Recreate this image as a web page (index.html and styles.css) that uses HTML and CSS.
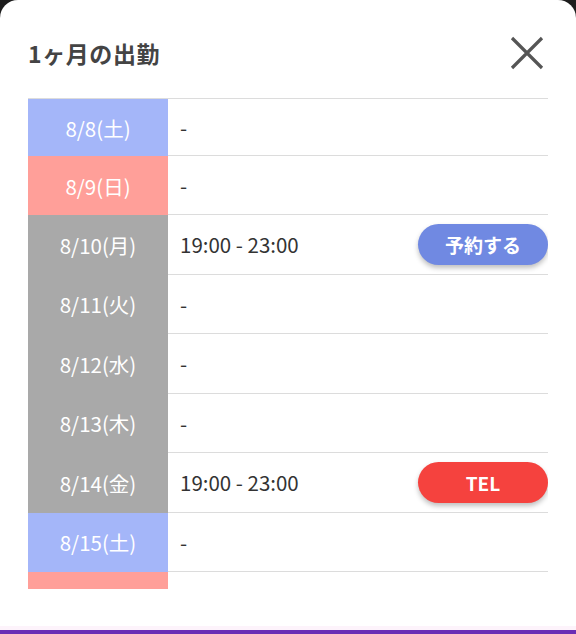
FILE: index.html
```html
<!DOCTYPE html>
<html lang="ja">
<head>
<meta charset="utf-8">
<link rel="stylesheet" href="styles.css">
</head>
<body>
<div class="modal">
  <div class="header">
    <h2 class="title">1ヶ月の出勤</h2>
    <button class="close" aria-label="閉じる">
      <svg width="34" height="34" viewBox="0 0 34 34"><path d="M2 2 L32 32 M32 2 L2 32" stroke="#555" stroke-width="3.2" fill="none"/></svg>
    </button>
  </div>
  <div class="list">
    <div class="row first"><div class="date sat">8/8(土)</div><div class="info">-</div></div>
    <div class="row second"><div class="date sun">8/9(日)</div><div class="info">-</div></div>
    <div class="row"><div class="date wd">8/10(月)</div><div class="info">19:00 - 23:00<span class="btn reserve">予約する</span></div></div>
    <div class="row"><div class="date wd">8/11(火)</div><div class="info">-</div></div>
    <div class="row"><div class="date wd">8/12(水)</div><div class="info">-</div></div>
    <div class="row"><div class="date wd">8/13(木)</div><div class="info">-</div></div>
    <div class="row"><div class="date wd">8/14(金)</div><div class="info">19:00 - 23:00<span class="btn tel">TEL</span></div></div>
    <div class="row"><div class="date sat">8/15(土)</div><div class="info">-</div></div>
    <div class="row"><div class="date sun"></div><div class="info"></div></div>
  </div>
  <div class="spacer"></div>
  <div class="bottom"></div>
</div>
</body>
</html>
```
FILE: styles.css
```css
* { box-sizing: border-box; }
html, body { margin: 0; padding: 0; }
body {
  background: #1d1d1d;
  font-family: "Noto Sans CJK JP", "Noto Sans", sans-serif;
  overflow: hidden;
}
.modal {
  width: 576px;
  height: 634px;
  background: #fff;
  border-radius: 18px 18px 0 0;
  display: flex;
  flex-direction: column;
  overflow: hidden;
}
.header {
  height: 98px;
  flex: none;
  display: flex;
  align-items: center;
  justify-content: space-between;
  padding: 8px 32px 0 28px;
}
.title {
  margin: 0;
  font-size: 23px;
  font-weight: 700;
  color: #444;
  letter-spacing: 0.6px;
}
.close {
  border: 0;
  background: none;
  padding: 0;
  width: 34px;
  height: 34px;
  display: flex;
}
.list {
  margin: 0 28px;
  height: 491px;
  flex: none;
  overflow: hidden;
  border-top: 1px solid #dcdcdc;
}
.row {
  display: grid;
  grid-template-columns: 140px 1fr;
  height: 59.5px;
}
.row.first { height: 57px; }
.row.second { height: 59px; }
.date {
  color: #fff;
  font-size: 20.5px;
  display: flex;
  align-items: center;
  justify-content: center;
}
.sat { background: #a4b6f9; }
.sun { background: #ff9f99; }
.wd { background: #a9a9a9; }
.info {
  border-bottom: 1px solid #dcdcdc;
  display: flex;
  align-items: center;
  padding-left: 12px;
  font-size: 20.5px;
  color: #333;
}
.btn {
  margin-left: auto;
  width: 130px;
  height: 41px;
  border-radius: 21px;
  color: #fff;
  font-weight: 700;
  font-size: 19px;
  display: flex;
  align-items: center;
  justify-content: center;
  box-shadow: 0 3px 5px rgba(0,0,0,0.25);
}
.reserve { background: #7089e2; }
.tel { background: #f5423e; }
.spacer { flex: 1; }
.bottom {
  height: 8px;
  flex: none;
  background: linear-gradient(#fdf3fb 0 50%, #6a2db5 50% 100%);
}
```
